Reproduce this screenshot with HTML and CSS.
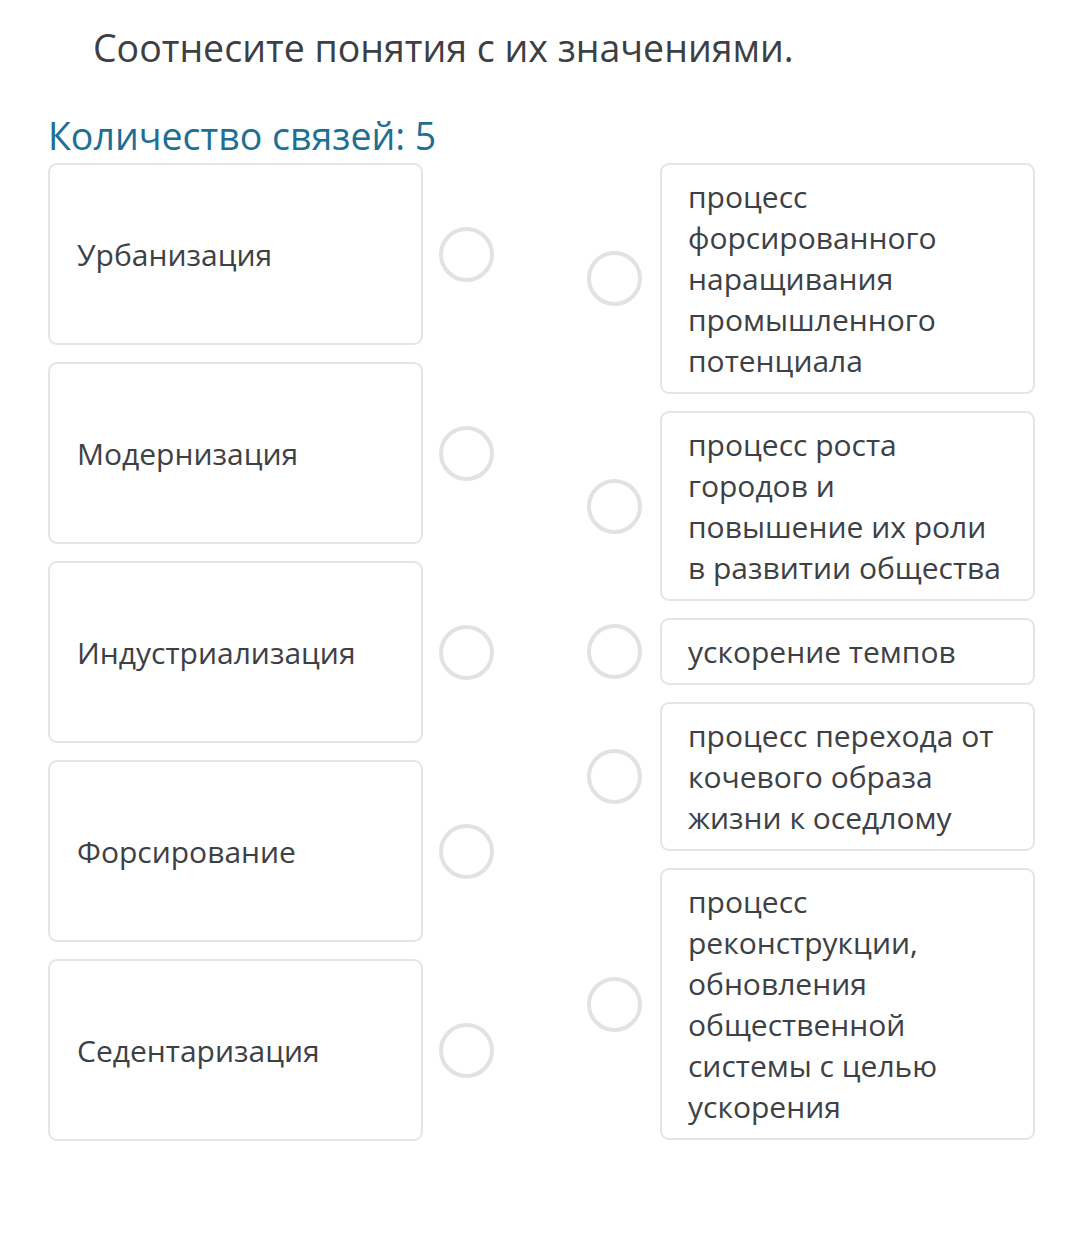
FILE: index.html
```html
<!DOCTYPE html>
<html lang="ru">
<head>
<meta charset="utf-8">
<link rel="stylesheet" href="styles.css">
</head>
<body>
<h1 class="title">Соотнесите понятия с их значениями.</h1>
<div class="count">Количество связей: 5</div>
<div class="board">
  <div class="col col-left">
    <div class="row"><div class="card term">Урбанизация</div><span class="dot"></span></div>
    <div class="row"><div class="card term">Модернизация</div><span class="dot"></span></div>
    <div class="row"><div class="card term">Индустриализация</div><span class="dot"></span></div>
    <div class="row"><div class="card term">Форсирование</div><span class="dot"></span></div>
    <div class="row"><div class="card term">Седентаризация</div><span class="dot"></span></div>
  </div>
  <div class="col col-right">
    <div class="row"><span class="dot"></span><div class="card def">процесс форсированного наращивания промышленного потенциала</div></div>
    <div class="row"><span class="dot"></span><div class="card def">процесс роста городов и повышение их роли в развитии общества</div></div>
    <div class="row"><span class="dot"></span><div class="card def">ускорение темпов</div></div>
    <div class="row"><span class="dot"></span><div class="card def">процесс перехода от кочевого образа жизни к оседлому</div></div>
    <div class="row"><span class="dot"></span><div class="card def">процесс реконструкции, обновления общественной системы с целью ускорения</div></div>
  </div>
</div>
</body>
</html>
```

FILE: styles.css
```css
html, body {
  margin: 0;
  padding: 0;
  background: #ffffff;
}
body {
  font-family: "Open Sans", "Noto Sans", sans-serif;
  color: #3c4043;
}
.title {
  margin: 0;
  padding: 24px 0 0 93px;
  font-size: 37.5px;
  font-weight: 400;
  line-height: 48px;
  color: #3c4044;
}
.count {
  margin-top: 41px;
  padding-left: 48px;
  font-size: 37.5px;
  line-height: 46px;
  color: #1e6f93;
}
.board {
  display: flex;
  align-items: flex-start;
  padding-left: 48px;
  margin-top: 4px;
}
.col {
  display: flex;
  flex-direction: column;
  gap: 17px;
}
.row {
  display: flex;
  align-items: center;
}
.card {
  box-sizing: border-box;
  width: 375px;
  border: 2px solid #e3e5e7;
  border-radius: 9px;
  background: #fff;
  font-size: 30px;
  line-height: 41px;
  color: #3d4145;
}
.term {
  height: 182px;
  display: flex;
  align-items: center;
  padding: 0 27px;
}
.def {
  padding: 11px 28px 11px 26px;
  margin-left: 18px;
}
.dot {
  box-sizing: border-box;
  width: 55px;
  height: 55px;
  border: 4px solid #dfe3e6;
  border-radius: 50%;
  flex: none;
}
.col-left .dot {
  margin-left: 16px;
}
.col-right {
  margin-left: 93px;
}
```
